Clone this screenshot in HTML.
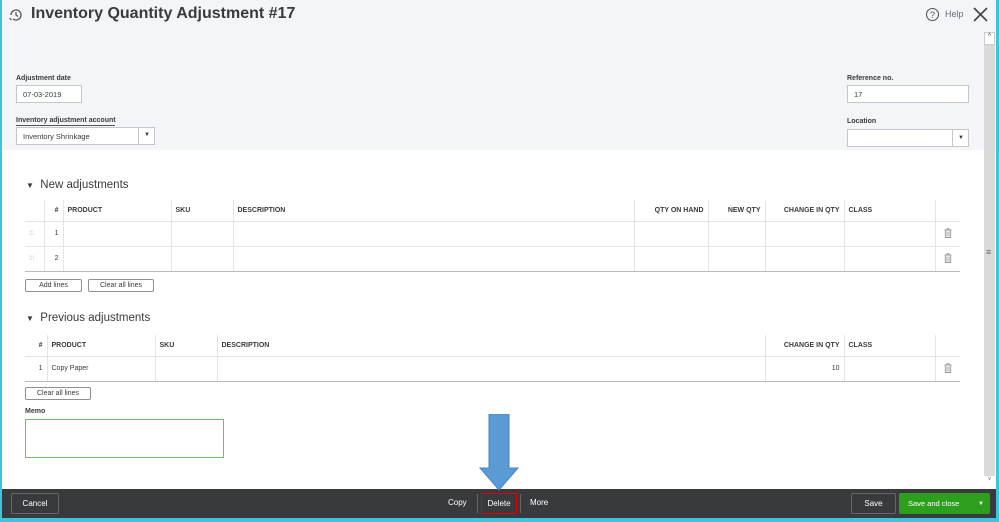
<!DOCTYPE html>
<html><head><style>
*{margin:0;padding:0;box-sizing:border-box}
body{width:999px;height:522px;position:relative;overflow:hidden;background:#fff;font-family:"Liberation Sans",sans-serif;color:#393a3d}
.a{position:absolute}
.hdr{left:0;top:0;width:999px;height:150px;background:#f4f5f8}
.lbl{font-size:7px;font-weight:bold;color:#393a3d;white-space:nowrap}
.inp{background:#fff;border:1px solid #c4c6cc;font-size:7.5px;padding:0 6px;display:flex;align-items:center}
.tbl{border-collapse:collapse;position:absolute;font-size:7px}
.tbl th{font-weight:bold;text-align:left;padding:0 4px;border-left:1px solid #e3e5e8;border-bottom:1px solid #e3e5e8;height:21px}
.tbl td{border-left:1px solid #e3e5e8;border-bottom:1px solid #e3e5e8;padding:0 4px;height:25px}
.tbl tr:last-child td{border-bottom:1px solid #b8bac0}
.tbl th:first-child,.tbl td:first-child{border-left:none}
.r{text-align:right!important}
.btn{border:1px solid #8d9096;border-radius:2px;background:#fff;font-size:7px;display:flex;align-items:center;justify-content:center}
.sec{font-size:11.5px;color:#393a3d}
.trash{text-align:center}
</style></head><body>
<div class="a hdr"></div>
<div class="a" style="left:0;top:0;width:2px;height:522px;background:#3cc4e0"></div>
<div class="a" style="left:996px;top:0;width:3px;height:522px;background:#3cc4e0"></div>
<div class="a" style="left:0;top:518px;width:999px;height:4px;background:#3cc4e0"></div>
<svg class="a" style="left:8px;top:7px" width="16" height="16" viewBox="0 0 16 16"><path d="M3 8a5 5 0 1 1 2 4" fill="none" stroke="#555" stroke-width="1.3"/><path d="M8 5v3l2 1.5" fill="none" stroke="#555" stroke-width="1.2"/><path d="M1.5 11l2 2" stroke="#555" stroke-width="1.2"/></svg>
<div class="a" style="left:31px;top:5px;font-size:16px;font-weight:bold;color:#393a3d">Inventory Quantity Adjustment #17</div>
<svg class="a" style="left:925px;top:7px" width="15" height="15"><circle cx="7.5" cy="7.5" r="6" fill="none" stroke="#555" stroke-width="1.1"/><text x="7.5" y="11" font-size="9" text-anchor="middle" fill="#555" font-family="Liberation Sans">?</text></svg>
<div class="a" style="left:945px;top:9px;font-size:9px;color:#6b6c72">Help</div>
<svg class="a" style="left:973px;top:7px" width="15" height="15"><path d="M1 1L14 14M14 1L1 14" stroke="#444" stroke-width="1.6"/></svg>
<div class="a" style="left:984px;top:32px;width:11px;height:456px;background:#dadada"></div>
<div class="a" style="left:984px;top:32px;width:11px;height:13px;background:#fff;border:1px solid #ccc;font-size:7px;text-align:center">^</div>
<div class="a" style="left:986px;top:247px;font-size:9px;color:#666">≡</div>
<div class="a" style="left:984px;top:476px;width:11px;height:12px;background:#fff;font-size:6px;text-align:center;color:#777">v</div>

<div class="a lbl" style="left:16px;top:75px">Adjustment date</div>
<div class="a inp" style="left:16px;top:85px;width:66px;height:18px">07-03-2019</div>
<div class="a lbl" style="left:16px;top:117px;border-bottom:1px solid #555;padding-bottom:1px;width:99px">Inventory adjustment account</div>
<div class="a inp" style="left:16px;top:127px;width:139px;height:18px">Inventory Shrinkage</div>
<div class="a" style="left:138px;top:128px;width:1px;height:16px;background:#c4c6cc"></div>
<div class="a" style="left:144px;top:132px;font-size:6px">▼</div>
<div class="a lbl" style="left:847px;top:75px">Reference no.</div>
<div class="a inp" style="left:847px;top:85px;width:122px;height:18px">17</div>
<div class="a lbl" style="left:847px;top:118px">Location</div>
<div class="a inp" style="left:847px;top:129px;width:122px;height:18px"></div>
<div class="a" style="left:952px;top:130px;width:1px;height:16px;background:#c4c6cc"></div>
<div class="a" style="left:958px;top:135px;font-size:6px">▼</div>

<div class="a sec" style="left:26px;top:179px"><span style="font-size:8px">▼</span>&nbsp; New adjustments</div>
<table class="tbl" style="left:25px;top:200px;width:935px">
<tr><th style="width:19px"></th><th style="width:19px" class="r">#</th><th style="width:108px">PRODUCT</th><th style="width:62px">SKU</th><th style="width:401px">DESCRIPTION</th><th style="width:74px" class="r">QTY ON HAND</th><th style="width:57px" class="r">NEW QTY</th><th style="width:79px" class="r">CHANGE IN QTY</th><th style="width:91px">CLASS</th><th></th></tr>
<tr><td style="color:#bbb;font-size:6px">⁞⁞⁞</td><td class="r">1</td><td></td><td></td><td></td><td></td><td></td><td></td><td></td><td class="trash"><svg width="8" height="10"><path d="M0.5 2H7.5M3 2V0.7H5V2M1.3 2.5V9.5H6.7V2.5M3 3.5V8.5M5 3.5V8.5" fill="none" stroke="#999" stroke-width="0.9"/></svg></td></tr>
<tr><td style="color:#bbb;font-size:6px">⁞⁞⁞</td><td class="r">2</td><td></td><td></td><td></td><td></td><td></td><td></td><td></td><td class="trash"><svg width="8" height="10"><path d="M0.5 2H7.5M3 2V0.7H5V2M1.3 2.5V9.5H6.7V2.5M3 3.5V8.5M5 3.5V8.5" fill="none" stroke="#999" stroke-width="0.9"/></svg></td></tr>
</table>
<div class="a btn" style="left:25px;top:279px;width:57px;height:13px">Add lines</div>
<div class="a btn" style="left:88px;top:279px;width:66px;height:13px">Clear all lines</div>

<div class="a sec" style="left:26px;top:312px"><span style="font-size:8px">▼</span>&nbsp; Previous adjustments</div>
<table class="tbl" style="left:25px;top:335px;width:935px">
<tr><th style="width:22px" class="r">#</th><th style="width:108px">PRODUCT</th><th style="width:62px">SKU</th><th style="width:548px">DESCRIPTION</th><th style="width:79px" class="r">CHANGE IN QTY</th><th style="width:91px">CLASS</th><th></th></tr>
<tr><td class="r">1</td><td>Copy Paper</td><td></td><td></td><td class="r">10</td><td></td><td class="trash"><svg width="8" height="10"><path d="M0.5 2H7.5M3 2V0.7H5V2M1.3 2.5V9.5H6.7V2.5M3 3.5V8.5M5 3.5V8.5" fill="none" stroke="#999" stroke-width="0.9"/></svg></td></tr>
</table>
<div class="a btn" style="left:25px;top:387px;width:66px;height:13px">Clear all lines</div>
<div class="a lbl" style="left:25px;top:408px">Memo</div>
<div class="a" style="left:25px;top:419px;width:199px;height:39px;border:1.5px solid #6cbf6c;background:#fff"></div>

<div class="a" style="left:2px;top:489px;width:994px;height:29px;background:#393a3d"></div>
<div class="a btn" style="left:11px;top:493px;width:48px;height:21px;background:#393a3d;color:#fff;border-color:#666;font-size:8px">Cancel</div>
<div class="a" style="left:448px;top:498px;font-size:8px;color:#fff">Copy</div>
<div class="a" style="left:477px;top:494px;width:1px;height:19px;background:#666"></div>
<div class="a" style="left:481px;top:493px;width:36px;height:21px;border:1px solid #e00000;color:#fff;font-size:8px;line-height:19px;text-align:center">Delete</div>
<div class="a" style="left:520px;top:494px;width:1px;height:19px;background:#666"></div>
<div class="a" style="left:530px;top:498px;font-size:8px;color:#fff">More</div>
<div class="a btn" style="left:851px;top:493px;width:45px;height:21px;background:#393a3d;color:#fff;border-color:#666;font-size:8px">Save</div>
<div class="a" style="left:899px;top:493px;width:91px;height:21px;background:#2ca01c;border-radius:2px;color:#fff;font-size:7.5px;display:flex;align-items:center;padding-left:9px">Save and close<span style="position:absolute;right:6px;font-size:6px">▼</span></div>

<svg class="a" style="left:479px;top:414px" width="40" height="77"><path d="M10 0H30V54H39L20 76L1 54H10Z" fill="#5b9bd5" stroke="#4a86c0" stroke-width="1"/></svg>
</body></html>
